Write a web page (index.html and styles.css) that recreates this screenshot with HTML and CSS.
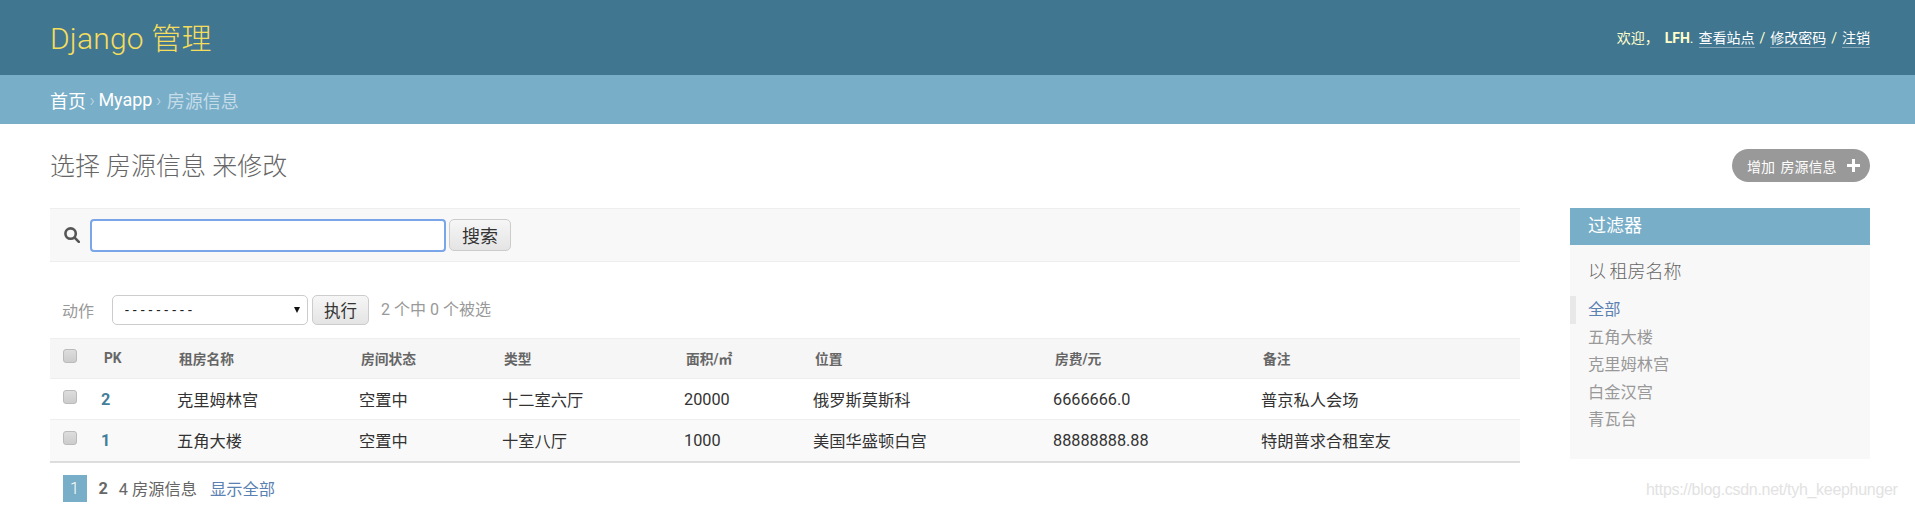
FILE: index.html
```html
<!DOCTYPE html>
<html lang="zh-CN">
<head>
<meta charset="utf-8">
<title>选择 房源信息 来修改</title>
<link rel="stylesheet" href="styles.css">
</head>
<body>
<header class="site-header">
  <div class="branding">Django 管理</div>
  <div class="user-tools">欢迎， <strong>LFH</strong>. <a href="#">查看站点</a> / <a href="#">修改密码</a> / <a href="#">注销</a></div>
</header>
<nav class="breadcrumbs"><a href="#">首页</a><span class="sep">›</span><a href="#">Myapp</a><span class="sep">›</span><span class="current-crumb">房源信息</span></nav>
<div class="content">
  <div class="title-row">
    <h1>选择 房源信息 来修改</h1>
    <a class="add-btn" href="#">增加 房源信息
      <svg class="plus" viewBox="0 0 13 13" width="13" height="13"><path d="M5 0h3v5h5v3H8v5H5V8H0V5h5z" fill="#fff"/></svg>
    </a>
  </div>
  <div class="columns">
    <div class="main">
      <div class="toolbar">
        <svg class="search-icon" viewBox="0 0 16 16" width="16" height="16"><circle cx="6.6" cy="6.6" r="5.2" fill="none" stroke="#555" stroke-width="2.6"/><path d="M10.6 10.6l4.2 4.2" stroke="#555" stroke-width="2.6" stroke-linecap="round"/></svg>
        <input class="search-input" type="text">
        <button class="btn search-btn" type="button">搜索</button>
      </div>
      <div class="actions">
        <span class="actions-label">动作</span>
        <span class="select-wrap"><select class="action-select"><option>---------</option></select></span>
        <button class="btn go-btn" type="button">执行</button>
        <span class="counter">2 个中 0 个被选</span>
      </div>
      <table class="results">
        <colgroup>
          <col class="c1"><col class="c2"><col class="c3"><col class="c4"><col class="c5"><col class="c6"><col class="c7"><col class="c8"><col class="c9">
        </colgroup>
        <thead>
          <tr>
            <th><input class="check" type="checkbox"></th>
            <th>PK</th><th>租房名称</th><th>房间状态</th><th>类型</th><th>面积/㎡</th><th>位置</th><th>房费/元</th><th>备注</th>
          </tr>
        </thead>
        <tbody>
          <tr>
            <td><input class="check" type="checkbox"></td>
            <td><a class="pk" href="#">2</a></td><td>克里姆林宫</td><td>空置中</td><td>十二室六厅</td><td>20000</td><td>俄罗斯莫斯科</td><td>6666666.0</td><td>普京私人会场</td>
          </tr>
          <tr class="alt">
            <td><input class="check" type="checkbox"></td>
            <td><a class="pk" href="#">1</a></td><td>五角大楼</td><td>空置中</td><td>十室八厅</td><td>1000</td><td>美国华盛顿白宫</td><td>88888888.88</td><td>特朗普求合租室友</td>
          </tr>
        </tbody>
      </table>
      <div class="paginator">
        <span class="page current">1</span>
        <a class="page-link" href="#">2</a>
        <span>4 房源信息</span>
        <a class="show-all" href="#">显示全部</a>
      </div>
    </div>
    <aside class="filter">
      <h2>过滤器</h2>
      <h3>以 租房名称</h3>
      <ul>
        <li class="selected"><a href="#">全部</a></li>
        <li><a href="#">五角大楼</a></li>
        <li><a href="#">克里姆林宫</a></li>
        <li><a href="#">白金汉宫</a></li>
        <li><a href="#">青瓦台</a></li>
      </ul>
    </aside>
  </div>
</div>
<div class="watermark">https://blog.csdn.net/tyh_keephunger</div>
</body>
</html>
```
FILE: styles.css
```css
* { box-sizing: border-box; }
html, body { margin: 0; height: 509px; overflow: hidden; background: #fff; }
body { font-family: Roboto, "Noto Sans CJK SC", sans-serif; font-size: 16px; color: #333; position: relative; }
a { text-decoration: none; }

.site-header { height: 75px; padding: 0 45px 3px 50px; background: #417690; color: #ffc; display: flex; align-items: center; justify-content: space-between; }
.branding { font-size: 30px; font-weight: 300; color: #f5dd5d; letter-spacing: 0.2px; }
.user-tools { font-size: 14px; font-weight: 400; word-spacing: 1.5px; margin-top: 2px; }
.user-tools strong { font-weight: 700; margin-left: 1px; }
.user-tools a { color: #fff; padding-bottom: 1px; border-bottom: 1px solid #86a6b8; }

.breadcrumbs { height: 49px; padding: 0 50px; background: #79aec8; color: #c4dce8; font-size: 18px; font-weight: 400; display: flex; align-items: center; }
.breadcrumbs a { color: #fff; }
.sep { margin: 0 3.5px; font-weight: 300; }
.current-crumb { margin-left: 2px; }

.content { padding: 25px 45px 0 50px; }
.title-row { display: flex; align-items: center; justify-content: space-between; height: 33px; margin-bottom: 26px; }
h1 { margin: 0 0 3px; font-size: 25px; font-weight: 300; color: #666; }
.add-btn { height: 33px; width: 138px; padding: 0 10px 0 15px; border-radius: 17px; background: #999; color: #fff; font-size: 14px; word-spacing: 2px; display: flex; align-items: center; justify-content: space-between; }

.columns { display: flex; gap: 50px; }
.main { width: 1470px; }

.toolbar { height: 54px; display: flex; align-items: center; padding-left: 14px; background: #f8f8f8; border-top: 1px solid #eee; border-bottom: 1px solid #eee; }
.search-icon { margin-right: 10px; flex: none; }
.search-input { width: 356px; height: 33px; border: 2px solid #7aa5e8; border-radius: 4px; background: #fff; outline: none; margin-right: 3px; }
.btn { height: 32px; padding: 0 13px; border: 1px solid #ccc; border-radius: 5px; background: linear-gradient(#f6f6f6, #e4e4e4); font-family: inherit; font-size: 16px; color: #333; }
.search-btn { font-size: 18px; padding: 0 12px; }

.actions { display: flex; align-items: center; height: 30px; margin-top: 33px; padding-left: 12px; color: #999; font-size: 16px; }
.actions-label { width: 50px; }
.select-wrap { position: relative; display: block; width: 196px; height: 30px; margin-right: 4px; }
.select-wrap::after { content: ""; position: absolute; right: 8px; top: 12px; border-left: 3.5px solid transparent; border-right: 3.5px solid transparent; border-top: 6px solid #111; }
.action-select { appearance: none; width: 100%; height: 30px; padding: 0 12px; border: 1px solid #ccc; border-radius: 5px; background: #fff; font-family: inherit; font-size: 14px; letter-spacing: 4px; color: #222; }
.go-btn { height: 30px; padding: 0 11px; margin-right: 12px; font-size: 16.5px; }
.counter { margin-bottom: 4px; }

.results { width: 1470px; margin-top: 13px; border-collapse: collapse; table-layout: fixed; }
.c1 { width: 39.5px; } .c2 { width: 75px; } .c3 { width: 182px; } .c4 { width: 143px; } .c5 { width: 182px; }
.c6 { width: 129px; } .c7 { width: 240px; } .c8 { width: 208px; } .c9 { width: 271.5px; }
.results th, .results td { text-align: left; padding: 0 0 0 12.5px; }
.results th { height: 40px; padding: 0 0 1px 14.5px; background: #f6f6f6; border-top: 1px solid #eee; border-bottom: 1px solid #eee; color: #666; font-size: 13.75px; font-weight: 700; }
.results th:first-child { padding-left: 12.5px; }
.results td { height: 41px; font-size: 16.25px; color: #333; border-bottom: 1px solid #eee; }
.results .alt td { height: 42px; background: #f9f9f9; border-bottom: 2px solid #ddd; }
.pk { color: #447e9b; font-weight: 700; margin-left: -1px; }
.check { appearance: none; display: block; width: 14px; height: 14px; margin: 0 0 4px; border: 1px solid #bbb; border-radius: 3px; background: linear-gradient(#ddd, #ccc); }

.paginator { display: flex; align-items: center; height: 27px; margin-top: 12px; padding-left: 12.5px; color: #666; font-size: 16.25px; }
.page.current { width: 24px; height: 27px; background: #79aec8; color: #fff; display: flex; align-items: center; justify-content: center; font-weight: 300; margin-right: 12px; }
.page-link { color: #666; font-weight: 700; margin-right: 11px; }
.show-all { color: #5b80b2; margin-left: 13px; }

.filter { width: 300px; height: 251px; background: #f8f8f8; }
.filter h2 { margin: 0; height: 37px; padding-left: 18px; background: #79aec8; color: #fff; font-size: 18px; font-weight: 400; line-height: 36px; }
.filter h3 { margin: 15px 0 0 18px; font-size: 18px; font-weight: 300; color: #666; line-height: 24px; word-spacing: -1px; }
.filter ul { list-style: none; margin: 12px 0 0; padding: 0; }
.filter li { height: 27.5px; padding-left: 18px; font-size: 16.25px; line-height: 27.5px; }
.filter li a { color: #999; }
.filter li.selected { border-left: 6px solid #e8e8e8; padding-left: 12px; }
.filter li.selected a { color: #5b80b2; }

.watermark { position: absolute; left: 1646px; top: 481px; font-family: "Liberation Sans", sans-serif; font-size: 16px; letter-spacing: -0.3px; color: #e2e2e2; }
```
